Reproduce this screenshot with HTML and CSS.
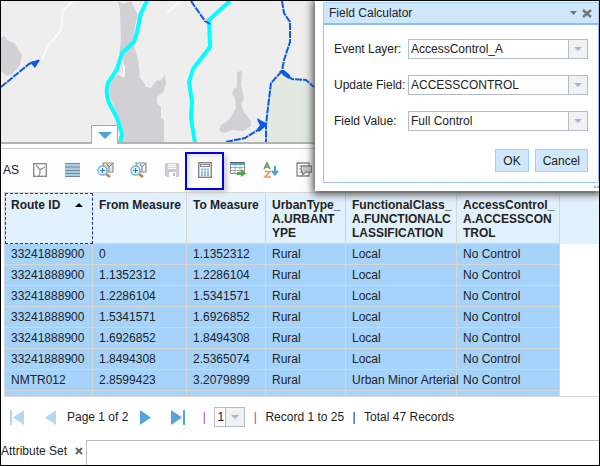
FILE: index.html
```html
<!DOCTYPE html>
<html lang="en">
<head>
<meta charset="utf-8">
<title>Attribute Set</title>
<link rel="stylesheet" href="styles.css">
</head>
<body>
<div class="app">
  <section class="map" aria-label="Map">
    <svg class="map-art" viewBox="1 1 598 141" preserveAspectRatio="xMinYMin slice">
      <path fill="#d0d0d5" d="M1 38l4-2 2 4 7 3 8 12-2 10-8 9-5 2-6-5zM118 1l2 9 1 30-2 15 5 23-7-4-7 8v14l8 22 4 24h42v-22l-3-2v-11l-4-4v-6l6-5 3-8-1-9-4 5-5 1-5 7-5-1-3-6-3-3-2-18-5-18 2-17 3-10-4-8-3-6-8 3z"/>
      <path fill="#d0d0d5" d="M237 72l4-1 1 2-1 12 3 13-3 6 3 8 7 9v5l-8 5-11-1-7 3-6-2 2-6 8-5 7-12-1-10-3-4 2-5 3-2z"/>
      <path fill="#e2e8e2" d="M270 84l12-12 10 8 28 2v60h-54l2-32z"/>
      <g fill="none" stroke="#fafafa" stroke-width="2">
        <path d="M73 1l-10 9-2 20-13 16-6 14M180 1l-13 12"/>
        <path d="M109 85v14l9 22M119 54l5 14v9"/>
      </g>
      <g fill="none" stroke="#00ffff" stroke-width="4" stroke-linejoin="round">
        <path d="M147 1l-6 12-4 19-3 10-12 11-5 16-9 14q-3 9 1 20l8 15 5 16-2 9"/>
        <path d="M230 1l-21 19 1 27-17 22-4 13 3 19-1 17 4 25"/>
      </g>
      <g fill="none" stroke="#0a5be6" stroke-width="2" stroke-dasharray="7 1">
        <path d="M1 87l28-23 11-4M191 1l14 20 5 3M282 1l2 12 6 9v20l-6 18-2 11M282 71l-11 12-3 24-2 18v17M226 142l19-4 21-13M282 71l10 8 14 1 8 7"/>
      </g>
      <path fill="#0a5be6" d="M30 62l10-2-5 8zM279 71l5-1 6 5-1 4-5-3zM257 118l5 3 4 2v3l-7 6-2-3 3-4-2-3z"/>
    </svg>
    <button class="map-toggle" type="button" aria-label="Collapse table">
      <svg width="14" height="7" viewBox="0 0 14 7"><path fill="#4fa3db" d="M0 0h14L7 7z"/></svg>
    </button>
  </section>

  <div class="toolbar">
    <span class="toolbar-label">AS</span>
    <button class="tool" type="button" aria-label="Clear map selection">
      <svg width="14" height="14" viewBox="0 0 14 14"><rect x=".7" y=".7" width="12.6" height="12.6" fill="#fff" stroke="#8c8c8c" stroke-width="1.4"/><path d="M3 2l4 5v3l-1 3M7 7l5-3M7 7l2-2" fill="none" stroke="#999" stroke-width="1.3"/></svg>
    </button>
    <button class="tool" type="button" aria-label="Show table rows">
      <svg width="15" height="14" viewBox="0 0 15 14"><path fill="#a5cfe6" d="M0 0h15v14H0z"/><path d="M0 .5h15M0 4h15M0 7.500h15M0 10.500h15M0 13.500h15" stroke="#78868e"/></svg>
    </button>
    <button class="tool" type="button" aria-label="Zoom to selected">
      <svg width="17" height="16" viewBox="0 0 17 16"><path fill="#e2e8ea" stroke="#8b9297" stroke-width="1.2" d="M6 1h10v9h-5L7 6z"/><path fill="#f1d86c" d="M7 2h4v7L8 6z"/><path d="M10 2l2 3 3-3M12 5v4" fill="none" stroke="#6a7b86"/><path d="M9 12l4 3" stroke="#b98352" stroke-width="2.500"/><circle cx="5.500" cy="8.500" r="4.500" fill="#e8f6ff" stroke="#6bb2da" stroke-width="1.3"/><path d="M3 8.500h5M5.500 6v5" stroke="#42789e" stroke-width="1.2"/></svg>
    </button>
    <button class="tool" type="button" aria-label="Zoom to records">
      <svg width="17" height="16" viewBox="0 0 17 16"><path fill="#eceff1" stroke="#8b9297" stroke-width="1.2" d="M6 1h10v9h-5L7 6z"/><path d="M10 2l2 3 3-3M12 5v4" fill="none" stroke="#7d878e"/><path d="M9 12l4 3" stroke="#b98352" stroke-width="2.500"/><circle cx="5.500" cy="8.500" r="4.500" fill="#e8f6ff" stroke="#6bb2da" stroke-width="1.3"/><path d="M3 8.500h5M5.500 6v5" stroke="#42789e" stroke-width="1.2"/></svg>
    </button>
    <button class="tool" type="button" aria-label="Save" disabled>
      <svg width="14" height="14" viewBox="0 0 14 14"><path fill="#cdc8e2" d="M0 0h14v14H2l-2-2z"/><path fill="#fff" d="M3 1h8v5H3zM4 9h7v5H4z"/><path fill="#d9d6e5" d="M3 2h8v1H3zM3 4h8v1H3z"/><path fill="#bcb6ce" d="M8 10h2v3H8z"/></svg>
    </button>
    <button class="tool tool-active" type="button" aria-label="Field calculator">
      <svg width="14" height="16" viewBox="0 0 14 16"><rect x=".7" y=".7" width="12.6" height="14.6" fill="#f7fbfd" stroke="#858585" stroke-width="1.4"/><rect x="2.500" y="2.500" width="9" height="2" fill="#fff" stroke="#858585"/><path d="M3 7.500h9M3 10.500h9M3 13h9" stroke="#7db8da" stroke-width="2" stroke-dasharray="2 1"/></svg>
    </button>
    <button class="tool" type="button" aria-label="Export table">
      <svg width="16" height="15" viewBox="0 0 16 15"><path fill="#fff" stroke="#85898b" d="M.5 .5h14v11H.5z"/><path fill="#59a5d4" d="M0 0h15v3H0z"/><path d="M1 5.500h13M1 8.500h13M5 3v8M10 3v8" stroke="#aaa"/><path d="M0 .5h15" stroke="#516979"/><path fill="#50a650" d="M7 10h4V7l5 4.500-5 3.500v-2H7z"/></svg>
    </button>
    <button class="tool" type="button" aria-label="Sort">
      <svg width="16" height="16" viewBox="0 0 16 16"><path d="M1 7l3-6 3 6M2 5h4" fill="none" stroke="#559a61" stroke-width="1.6"/><path d="M2 9.500h5L2 15h6" fill="none" stroke="#e69a55" stroke-width="1.6"/><path d="M12 4v8M9 9l3 3.500L15 9" fill="none" stroke="#499ed6" stroke-width="2"/></svg>
    </button>
    <button class="tool" type="button" aria-label="Review notes">
      <svg width="16" height="15" viewBox="0 0 16 15"><path fill="#fff" stroke="#858585" stroke-width="1.3" d="M1 1h12v13H1z"/><path d="M3 4h2M3 7h2M3 10h2" stroke="#5fa4cc" stroke-width="1.2"/><path fill="#eee" stroke="#808080" stroke-width="1.3" d="M5.500 4h10v6h-6l-3 3v-3h-1z"/><path d="M7 6h7M7 8h7" stroke="#a0a0a0"/></svg>
    </button>
  </div>

  <div class="grid">
    <table>
      <colgroup><col class="c-route"><col class="c-from"><col class="c-to"><col class="c-urban"><col class="c-func"><col class="c-access"><col></colgroup>
      <thead>
        <tr>
          <th class="sorted" aria-sort="ascending"><span class="sort-head">Route ID <svg width="8" height="4" viewBox="0 0 8 4"><path d="M0 4h8L4 0z"/></svg></span></th>
          <th>From Measure</th><th>To Measure</th><th>UrbanType_<br>A.URBANT<br>YPE</th><th>FunctionalClass_<br>A.FUNCTIONALC<br>LASSIFICATION</th><th>AccessControl_<br>A.ACCESSCON<br>TROL</th><th class="filler"></th>
        </tr>
      </thead>
      <tbody>
        <tr><td>33241888900</td><td>0</td><td>1.1352312</td><td>Rural</td><td>Local</td><td>No Control</td></tr>
        <tr><td>33241888900</td><td>1.1352312</td><td>1.2286104</td><td>Rural</td><td>Local</td><td>No Control</td></tr>
        <tr><td>33241888900</td><td>1.2286104</td><td>1.5341571</td><td>Rural</td><td>Local</td><td>No Control</td></tr>
        <tr><td>33241888900</td><td>1.5341571</td><td>1.6926852</td><td>Rural</td><td>Local</td><td>No Control</td></tr>
        <tr><td>33241888900</td><td>1.6926852</td><td>1.8494308</td><td>Rural</td><td>Local</td><td>No Control</td></tr>
        <tr><td>33241888900</td><td>1.8494308</td><td>2.5365074</td><td>Rural</td><td>Local</td><td>No Control</td></tr>
        <tr><td>NMTR012</td><td>2.8599423</td><td>3.2079899</td><td>Rural</td><td>Urban Minor Arterial</td><td>No Control</td></tr>
        <tr><td></td><td></td><td></td><td></td><td></td><td></td></tr>
      </tbody>
    </table>
  </div>

  <nav class="pager" aria-label="Pages">
    <button class="page-btn wide" type="button" aria-label="First page" disabled><svg width="14" height="15" viewBox="0 0 14 15"><path fill="#b2d8ee" d="M0 0h2v15H0zM14 0v15L3 7.500z"/></svg></button>
    <button class="page-btn" type="button" aria-label="Previous page" disabled><svg width="11" height="15" viewBox="0 0 11 15"><path fill="#b2d8ee" d="M11 0v15L0 7.500z"/></svg></button>
    <span>Page 1 of 2</span>
    <button class="page-btn next" type="button" aria-label="Next page"><svg width="11" height="15" viewBox="0 0 11 15"><path fill="#52a5db" d="M0 0v15l11-7.500z"/></svg></button>
    <button class="page-btn wide" type="button" aria-label="Last page"><svg width="14" height="15" viewBox="0 0 14 15"><path fill="#52a5db" d="M0 0v15l11-7.500zM12 0h2v15h-2z"/></svg></button>
    <span class="bar bar-tinted">|</span>
    <span class="combo combo-page"><select aria-label="Go to page"><option>1</option><option>2</option></select></span>
    <span class="bar bar-tinted">|</span>
    <span>Record 1 to 25</span>
    <span class="bar">|</span>
    <span>Total 47 Records</span>
  </nav>

  <div class="tabs">
    <div class="tab"><span>Attribute Set</span><button class="tab-close" type="button" aria-label="Close tab"><svg width="8" height="8" viewBox="0 0 8 8"><path d="M1 1l6 6M7 1L1 7" stroke="#666" stroke-width="2"/></svg></button></div>
    <div class="tab-rest"></div>
  </div>

  <form class="dialog" role="dialog" aria-labelledby="dialog-title">
    <header class="dialog-head">
      <span id="dialog-title">Field Calculator</span>
      <button class="head-btn" type="button" aria-label="Collapse"><svg width="7" height="4" viewBox="0 0 7 4"><path fill="#777" d="M0 0h7L3.500 4z"/></svg></button>
      <button class="head-btn" type="button" aria-label="Close"><svg width="10" height="9" viewBox="0 0 10 9"><path d="M1 1l8 7M9 1L1 8" stroke="#747474" stroke-width="2.400"/></svg></button>
    </header>
    <div class="dialog-body">
      <div class="field"><label for="layer">Event Layer:</label><span class="combo"><select id="layer"><option>AccessControl_A</option></select></span></div>
      <div class="field"><label for="update">Update Field:</label><span class="combo"><select id="update"><option>ACCESSCONTROL</option></select></span></div>
      <div class="field"><label for="value">Field Value:</label><span class="combo"><select id="value"><option>Full Control</option></select></span></div>
      <div class="actions"><button class="btn" type="button">OK</button><button class="btn" type="button">Cancel</button></div>
    </div>
    <svg class="grip" width="5" height="3" viewBox="0 0 5 3"><path fill="#aaa" d="M0 1h2v2H0zM3 1h2v2H3z"/></svg>
  </form>
</div>
</body>
</html>
```
FILE: styles.css
```css
* { box-sizing: border-box; }

body {
  margin: 0;
  font: 12px/14px "Liberation Sans", Arial, sans-serif;
  color: #222;
  background: #fff;
}

button {
  display: flex;
  align-items: center;
  justify-content: center;
  margin: 0;
  padding: 0;
  border: 0;
  background: none;
  font: inherit;
  color: inherit;
}

svg { display: block; flex: none; }

.app {
  position: relative;
  display: flex;
  flex-direction: column;
  height: 100vh;
  overflow: hidden;
  border: 1px solid #000;
}

/* Map */
.map {
  position: relative;
  flex: none;
  height: 143px;
  border-bottom: 2px solid #b3b3b3;
  background: #eee;
}

.map-art { width: 100%; height: 100%; }

.map-toggle {
  position: absolute;
  left: 90px;
  bottom: -2px;
  width: 27px;
  height: 19px;
  border: 1px solid #a9a9a9;
  border-bottom: 0;
  background: #fff;
}

/* Toolbar */
.toolbar {
  display: flex;
  align-items: center;
  flex: none;
  height: 44px;
  margin-top: 4px;
  padding: 0 0 2px 2px;
  border-top: 1px solid #c6cbd6;
  background: #fdfdfd;
}

.toolbar-label { width: 20px; }

.tool { position: relative; width: 33px; height: 36px; }

.tool-active::after {
  content: "";
  position: absolute;
  inset: 0 -3px -2px;
  border: 2px solid #0000e6;
  box-shadow: 3px 3px 5px #ccc, inset 3px 3px 4px #e4e4e4;
}

/* Attribute table */
.grid {
  flex: 1;
  min-height: 0;
  margin-left: 3px;
  overflow: hidden;
  border: 1px solid #d6d6da;
  border-right: 0;
}

table {
  width: 100%;
  table-layout: fixed;
  border-collapse: separate;
  border-spacing: 0;
}

.c-route { width: 88px; }
.c-from { width: 94px; }
.c-to { width: 79px; }
.c-urban { width: 80px; }
.c-func { width: 111px; }
.c-access { width: 103px; }

th, td {
  padding: 0 0 0 6px;
  text-align: left;
  white-space: nowrap;
  border-right: 1px solid #d8d6d1;
  border-bottom: 1px solid #d8d6d1;
}

th {
  height: 51px;
  padding-top: 5px;
  vertical-align: top;
  background: #e2f1fe;
  color: #222;
}

th.sorted {
  padding-top: 4px;
  padding-left: 5px;
  border: 1px dashed #2e2e9c;
}

th.filler { border: 0; }

.sort-head {
  display: flex;
  align-items: center;
  justify-content: space-between;
  padding-right: 9px;
}

td { height: 21px; background: #a6d3fb; }

/* Pager */
.pager {
  display: flex;
  align-items: center;
  flex: none;
  height: 43px;
  gap: 8px;
  padding: 0 0 3px 6px;
}

.page-btn { width: 18px; height: 20px; }
.page-btn.wide { width: 20px; margin-right: 6px; }
.page-btn.next { margin-right: 6px; }

.bar { width: 4px; text-align: center; }
.bar-tinted { color: #a0489c; }

/* Bottom tabs */
.tabs { display: flex; flex: none; height: 25px; }

.tab {
  display: flex;
  align-items: center;
  gap: 6px;
  padding: 0 1px 4px 0;
}

.tab-close { width: 12px; height: 14px; }

.tab-rest {
  flex: 1;
  border-top: 1px solid #b9bdc7;
  border-left: 1px solid #b9bdc7;
}

/* Combo boxes */
.combo {
  position: relative;
  display: flex;
  flex: 1;
  height: 20px;
}

.combo select {
  appearance: none;
  width: 100%;
  margin: 0;
  padding: 0 20px 0 2px;
  border: 1px solid #b5bbc8;
  border-radius: 0;
  background: #fff;
  font: inherit;
  color: inherit;
}

.combo::before {
  content: "";
  position: absolute;
  inset: 1px 1px 1px auto;
  width: 18px;
  border-left: 1px solid #b5bbc8;
  background: #f1f1f4;
  pointer-events: none;
}

.combo::after {
  content: "";
  position: absolute;
  top: 8px;
  right: 6px;
  border: 4px solid transparent;
  border-top-color: #a1b6d6;
  border-bottom: 0;
  pointer-events: none;
}

.combo-page { flex: none; width: 31px; }
.combo-page select { padding-right: 18px; }

/* Field calculator dialog */
.dialog {
  position: absolute;
  top: 0;
  right: 0;
  width: 284px;
  padding: 1px 0 8px 8px;
  background: #fff;
  box-shadow: 0 1px 8px 2px #444;
}

.dialog-head {
  display: flex;
  align-items: center;
  height: 21px;
  padding: 0 4px 0 5px;
  border: 1px solid #a4d0f8;
  border-bottom: 0;
  background: #cfe7fc;
}

.dialog-head span { flex: 1; }

.head-btn { width: 14px; height: 16px; }

.dialog-body {
  display: flex;
  flex-direction: column;
  gap: 16px;
  padding: 14px 10px 10px;
  border: 1px solid #9abff8;
  border-top: 2px solid #8abdf8;
}

.field { display: flex; align-items: center; }
.field label { width: 74px; }

.actions {
  display: flex;
  justify-content: flex-end;
  gap: 6px;
  margin-top: 2px;
}

.btn {
  height: 23px;
  padding: 0 7px;
  border: 1px solid #9dd2f8;
  background: #d0e8fc;
}

.grip { position: absolute; right: 0; bottom: 3px; }
```
